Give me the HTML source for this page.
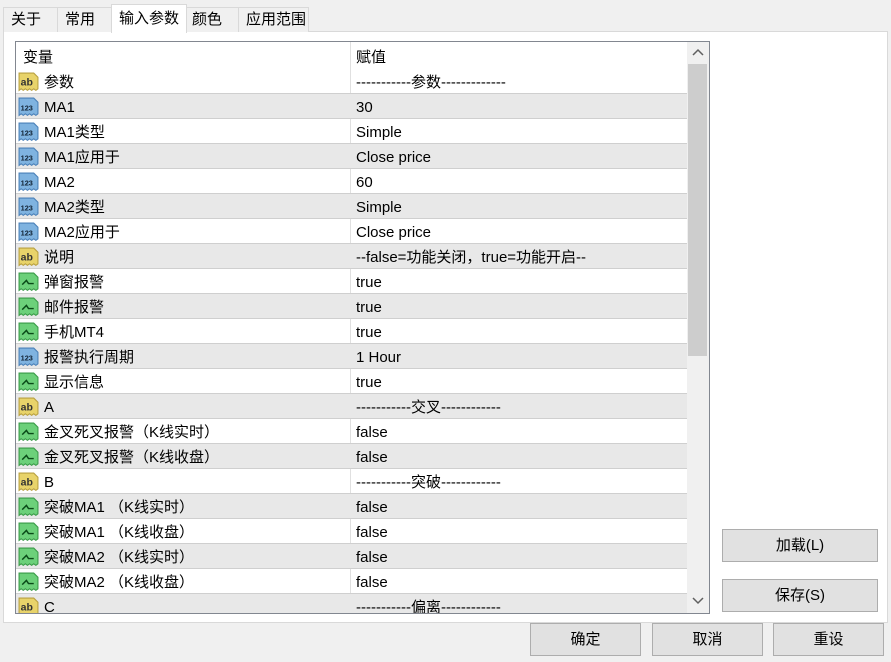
<!DOCTYPE html>
<html><head><meta charset="utf-8"><style>
*{margin:0;padding:0;box-sizing:border-box}
body{width:891px;height:662px;background:#f0f0f0;font-family:"Liberation Sans","Noto Sans CJK SC",sans-serif;font-size:15px;color:#000;position:relative;overflow:hidden}
.a{position:absolute}
.tab{position:absolute;top:7px;height:25px;border:1px solid #d9d9d9;border-bottom:none;background:#f0f0f0;padding-left:7px;line-height:24px}
.panel{position:absolute;left:3px;top:31px;width:885px;height:592px;background:#fff;border:1px solid #d9d9d9}
.list{position:absolute;left:15px;top:41px;width:695px;height:573px;border:1px solid #828790;background:#fff;overflow:hidden}
.row{position:absolute;left:0;width:671px;height:25px;border-bottom:1px solid #cfcfcf}
.g{background:#e8e8e8}
.n{position:absolute;left:28px;top:2px;line-height:24px;white-space:nowrap}
.v{position:absolute;left:340px;top:2px;line-height:24px;white-space:nowrap}
.ic{position:absolute;left:2px;top:3px;width:21px;height:20px}
.btn{position:absolute;background:#e1e1e1;border:1px solid #adadad;text-align:center;line-height:31px}
</style></head><body>
<div class="panel"></div>
<div class="tab" style="left:3px;width:55px">关于</div>
<div class="tab" style="left:57px;width:55px">常用</div>
<div class="tab" style="left:186px;width:53px;padding-left:5px">颜色</div>
<div class="tab" style="left:238px;width:71px">应用范围</div>
<div class="tab" style="left:111px;top:4px;height:29px;width:76px;background:#fff;line-height:28px">输入参数</div>
<div class="list">
<div class="a" style="left:7px;top:1px;line-height:30px">变量</div>
<div class="a" style="left:340px;top:1px;line-height:30px">赋值</div>
<div class="a" style="left:334px;top:0;width:1px;height:600px;background:#e0e0e0"></div>
<div id="rows"></div>
<div class="a" style="left:671px;top:0;width:22px;height:571px;background:#f0f0f0"></div>
<div class="a" style="left:672px;top:22px;width:19px;height:292px;background:#cdcdcd"></div>
<svg class="a" style="left:676px;top:6px" width="12" height="10"><path d="M1 7 L6 2 L11 7" stroke="#606060" stroke-width="1.5" fill="none"/></svg>
<svg class="a" style="left:676px;top:554px" width="12" height="10"><path d="M1 2 L6 7 L11 2" stroke="#606060" stroke-width="1.5" fill="none"/></svg>
</div>
<div class="btn" style="left:722px;top:529px;width:156px;height:33px">加载(L)</div>
<div class="btn" style="left:722px;top:579px;width:156px;height:33px">保存(S)</div>
<div class="btn" style="left:530px;top:623px;width:111px;height:33px">确定</div>
<div class="btn" style="left:652px;top:623px;width:111px;height:33px">取消</div>
<div class="btn" style="left:773px;top:623px;width:111px;height:33px">重设</div>
<script>
var ab='<svg class="ic" viewBox="0 0 20 19"><path d="M1 1h14l4 4v11l-2 1.5-2-1.5-2 1.5-2-1.5-2 1.5-2-1.5-2 1.5-2-1.5-2 1.5z" fill="#e8d36a" stroke="#b8a040"/><text x="2.5" y="13" font-size="10" font-family="Liberation Sans" fill="#333" font-weight="bold">ab</text></svg>';
var nu='<svg class="ic" viewBox="0 0 20 19"><path d="M1 1h14l4 4v11l-2 1.5-2-1.5-2 1.5-2-1.5-2 1.5-2-1.5-2 1.5-2-1.5-2 1.5z" fill="#7fb3e0" stroke="#4a80b8"/><text x="2.5" y="13" font-size="7" font-family="Liberation Sans" fill="#123" font-weight="bold">123</text></svg>';
var gr='<svg class="ic" viewBox="0 0 20 19"><path d="M1 1h14l4 4v11l-2 1.5-2-1.5-2 1.5-2-1.5-2 1.5-2-1.5-2 1.5-2-1.5-2 1.5z" fill="#6cd07a" stroke="#3a9a48"/><path d="M4 12l4-4 2 3h5" stroke="#0a4a18" stroke-width="1.4" fill="none"/></svg>';
var d=[[ab,'参数','-----------参数-------------'],[nu,'MA1','30'],[nu,'MA1类型','Simple'],[nu,'MA1应用于','Close price'],[nu,'MA2','60'],[nu,'MA2类型','Simple'],[nu,'MA2应用于','Close price'],[ab,'说明','--false=功能关闭，true=功能开启--'],[gr,'弹窗报警','true'],[gr,'邮件报警','true'],[gr,'手机MT4','true'],[nu,'报警执行周期','1 Hour'],[gr,'显示信息','true'],[ab,'A','-----------交叉------------'],[gr,'金叉死叉报警（K线实时）','false'],[gr,'金叉死叉报警（K线收盘）','false'],[ab,'B','-----------突破------------'],[gr,'突破MA1 （K线实时）','false'],[gr,'突破MA1 （K线收盘）','false'],[gr,'突破MA2 （K线实时）','false'],[gr,'突破MA2 （K线收盘）','false'],[ab,'C','-----------偏离------------']];
var h='';d.forEach(function(r,i){h+='<div class="row'+(i%2?' g':'')+'" style="top:'+(27+i*25)+'px">'+r[0]+'<span class="n">'+r[1]+'</span><span class="v">'+r[2]+'</span></div>'});
document.getElementById('rows').innerHTML=h;
</script>
</body></html>
